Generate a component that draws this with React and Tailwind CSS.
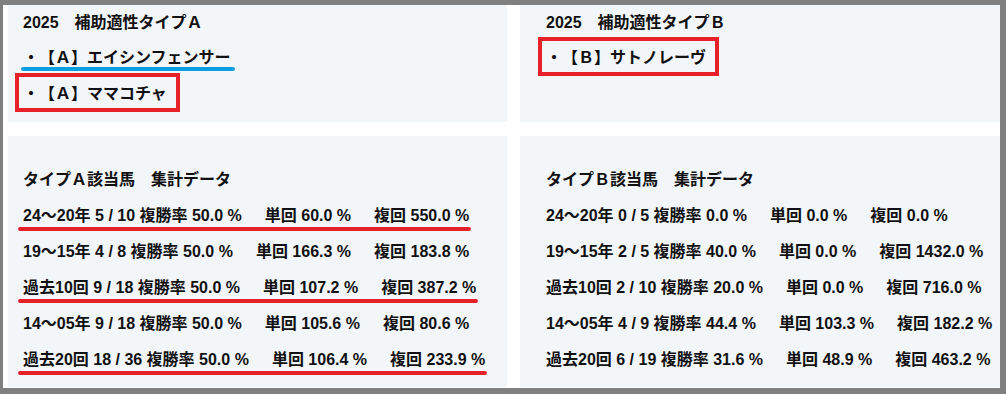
const rowsA = [
  { parts: ["24～20年 5 / 10 複勝率 50.0 %", "単回 60.0 %", "複回 550.0 %"], mark: true },
  { parts: ["19～15年 4 / 8 複勝率 50.0 %", "単回 166.3 %", "複回 183.8 %"] },
  { parts: ["過去10回 9 / 18 複勝率 50.0 %", "単回 107.2 %", "複回 387.2 %"], mark: true },
  { parts: ["14～05年 9 / 18 複勝率 50.0 %", "単回 105.6 %", "複回 80.6 %"] },
  { parts: ["過去20回 18 / 36 複勝率 50.0 %", "単回 106.4 %", "複回 233.9 %"], mark: true },
];

const rowsB = [
  { parts: ["24～20年 0 / 5 複勝率 0.0 %", "単回 0.0 %", "複回 0.0 %"] },
  { parts: ["19～15年 2 / 5 複勝率 40.0 %", "単回 0.0 %", "複回 1432.0 %"] },
  { parts: ["過去10回 2 / 10 複勝率 20.0 %", "単回 0.0 %", "複回 716.0 %"] },
  { parts: ["14～05年 4 / 9 複勝率 44.4 %", "単回 103.3 %", "複回 182.2 %"] },
  { parts: ["過去20回 6 / 19 複勝率 31.6 %", "単回 48.9 %", "複回 463.2 %"] },
];

function StatRow({ row }) {
  return (
    <div className="h-[36px] leading-[36px]">
      <div className="relative inline-flex gap-[23px]">
        {row.parts.map((p) => (
          <span key={p} className="whitespace-pre">{p}</span>
        ))}
        {row.mark && (
          <span className="absolute left-[-5px] right-[-2px] top-[29px] h-[4px] rounded-full bg-[#e8202a]" />
        )}
      </div>
    </div>
  );
}

function Horse({ name, boxed, blue }) {
  return (
    <div className="h-[36px] leading-[36px]">
      <span className="relative inline-block">
        {name}
        {boxed && (
          <span className="absolute left-[-8px] right-[-13px] top-[-3px] bottom-[0px] border-[4px] border-[#e8202a]" />
        )}
        {blue && (
          <span className="absolute left-[-2px] right-[-4px] top-[27px] h-[4px] rounded-full bg-[#0a9fe0]" />
        )}
      </span>
    </div>
  );
}

export default function App() {
  return (
    <div
      className="w-[1006px] h-[394px] bg-white border-l-[3px] border-t-[5px] border-r-[6px] border-b-[6px] border-[#808080]
                 pl-[5px] grid grid-cols-[499px_480px] grid-rows-[117px_251px] gap-x-[13px] gap-y-[14px]
                 text-[16px] font-bold text-[#111] [text-spacing-trim:space-all]"
      style={{ fontFamily: '"Liberation Sans", "Noto Sans CJK JP", sans-serif' }}
    >
      {/* top left */}
      <div className="bg-[#f3f6f9] pl-[15px]">
        <div className="h-[35px] leading-[35px]">2025　補助適性タイプＡ</div>
        <Horse name="・【Ａ】エイシンフェンサー" blue />
        <Horse name="・【Ａ】ママコチャ" boxed />
      </div>

      {/* top right */}
      <div className="bg-[#f3f6f9] pl-[26px]">
        <div className="h-[35px] leading-[35px]">2025　補助適性タイプＢ</div>
        <Horse name="・【Ｂ】サトノレーヴ" boxed />
      </div>

      {/* bottom left */}
      <div className="bg-[#f3f6f9] pl-[15px] pt-[25px]">
        <div className="h-[37px] leading-[37px]">タイプＡ該当馬　集計データ</div>
        {rowsA.map((r, i) => (
          <StatRow key={i} row={r} />
        ))}
      </div>

      {/* bottom right */}
      <div className="bg-[#f3f6f9] pl-[26px] pt-[25px]">
        <div className="h-[37px] leading-[37px]">タイプＢ該当馬　集計データ</div>
        {rowsB.map((r, i) => (
          <StatRow key={i} row={r} />
        ))}
      </div>
    </div>
  );
}
